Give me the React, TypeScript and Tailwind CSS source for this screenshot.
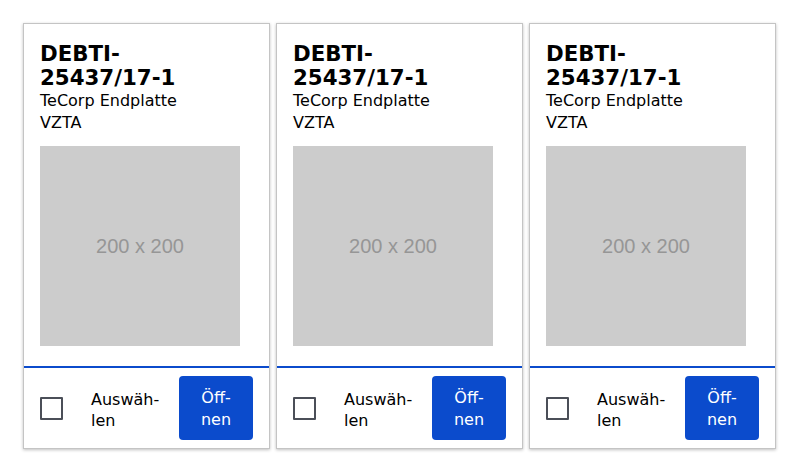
import React from "react";

const items = [1, 2, 3].map((i) => ({
  id: i,
  code: "DEBTI-25437/17-1",
  name: "TeCorp Endplatte VZTA",
}));

function Card({ code }: { code: string }) {
  const [head, tail] = [code.slice(0, 6), code.slice(6)];
  return (
    <div className="w-[247px] h-[426px] flex flex-col bg-white border border-[#c4c4c4] shadow-[0_1px_3px_rgba(0,0,0,0.25)]">
      {/* Header */}
      <div className="px-[16px] pt-[18px] pb-[19px] flex-1">
        <h2 className="text-[21.33px] leading-[24px] font-bold text-black">
          {head}
          <br />
          {tail}
        </h2>
        <p className="text-[16px] leading-[22px] text-black">
          TeCorp Endplatte
          <br />
          VZTA
        </p>
        <div className="mt-[12px] w-[200px] h-[200px] bg-[#cccccc] flex items-center justify-center">
          <span className="text-[20px] text-[#969696] font-['Liberation_Sans',Arial,sans-serif]">200 x 200</span>
        </div>
      </div>

      {/* Footer */}
      <div className="border-t-2 border-[#0b4bcc] h-[82px] flex items-center pl-[16px] pr-[16px]">
        <div className="w-[23px] h-[23px] border-2 border-[#4b4f58] rounded-[1px] bg-white" />
        <span className="ml-[28px] pt-[3px] flex-1 text-[16px] leading-[21px] text-black">
          Auswäh-
          <br />
          len
        </span>
        <button className="w-[74px] h-[64px] rounded-[4px] bg-[#0b4bcc] text-white text-[16px] leading-[22px] pt-[2px]">
          Öff-
          <br />
          nen
        </button>
      </div>
    </div>
  );
}

export default function App() {
  return (
    <div className="w-[800px] h-[472px] bg-white pt-[23px] pl-[23px] flex gap-[6px] items-start font-['DejaVu_Sans',Verdana,sans-serif]">
      {items.map((it) => (
        <Card key={it.id} code={it.code} />
      ))}
    </div>
  );
}
